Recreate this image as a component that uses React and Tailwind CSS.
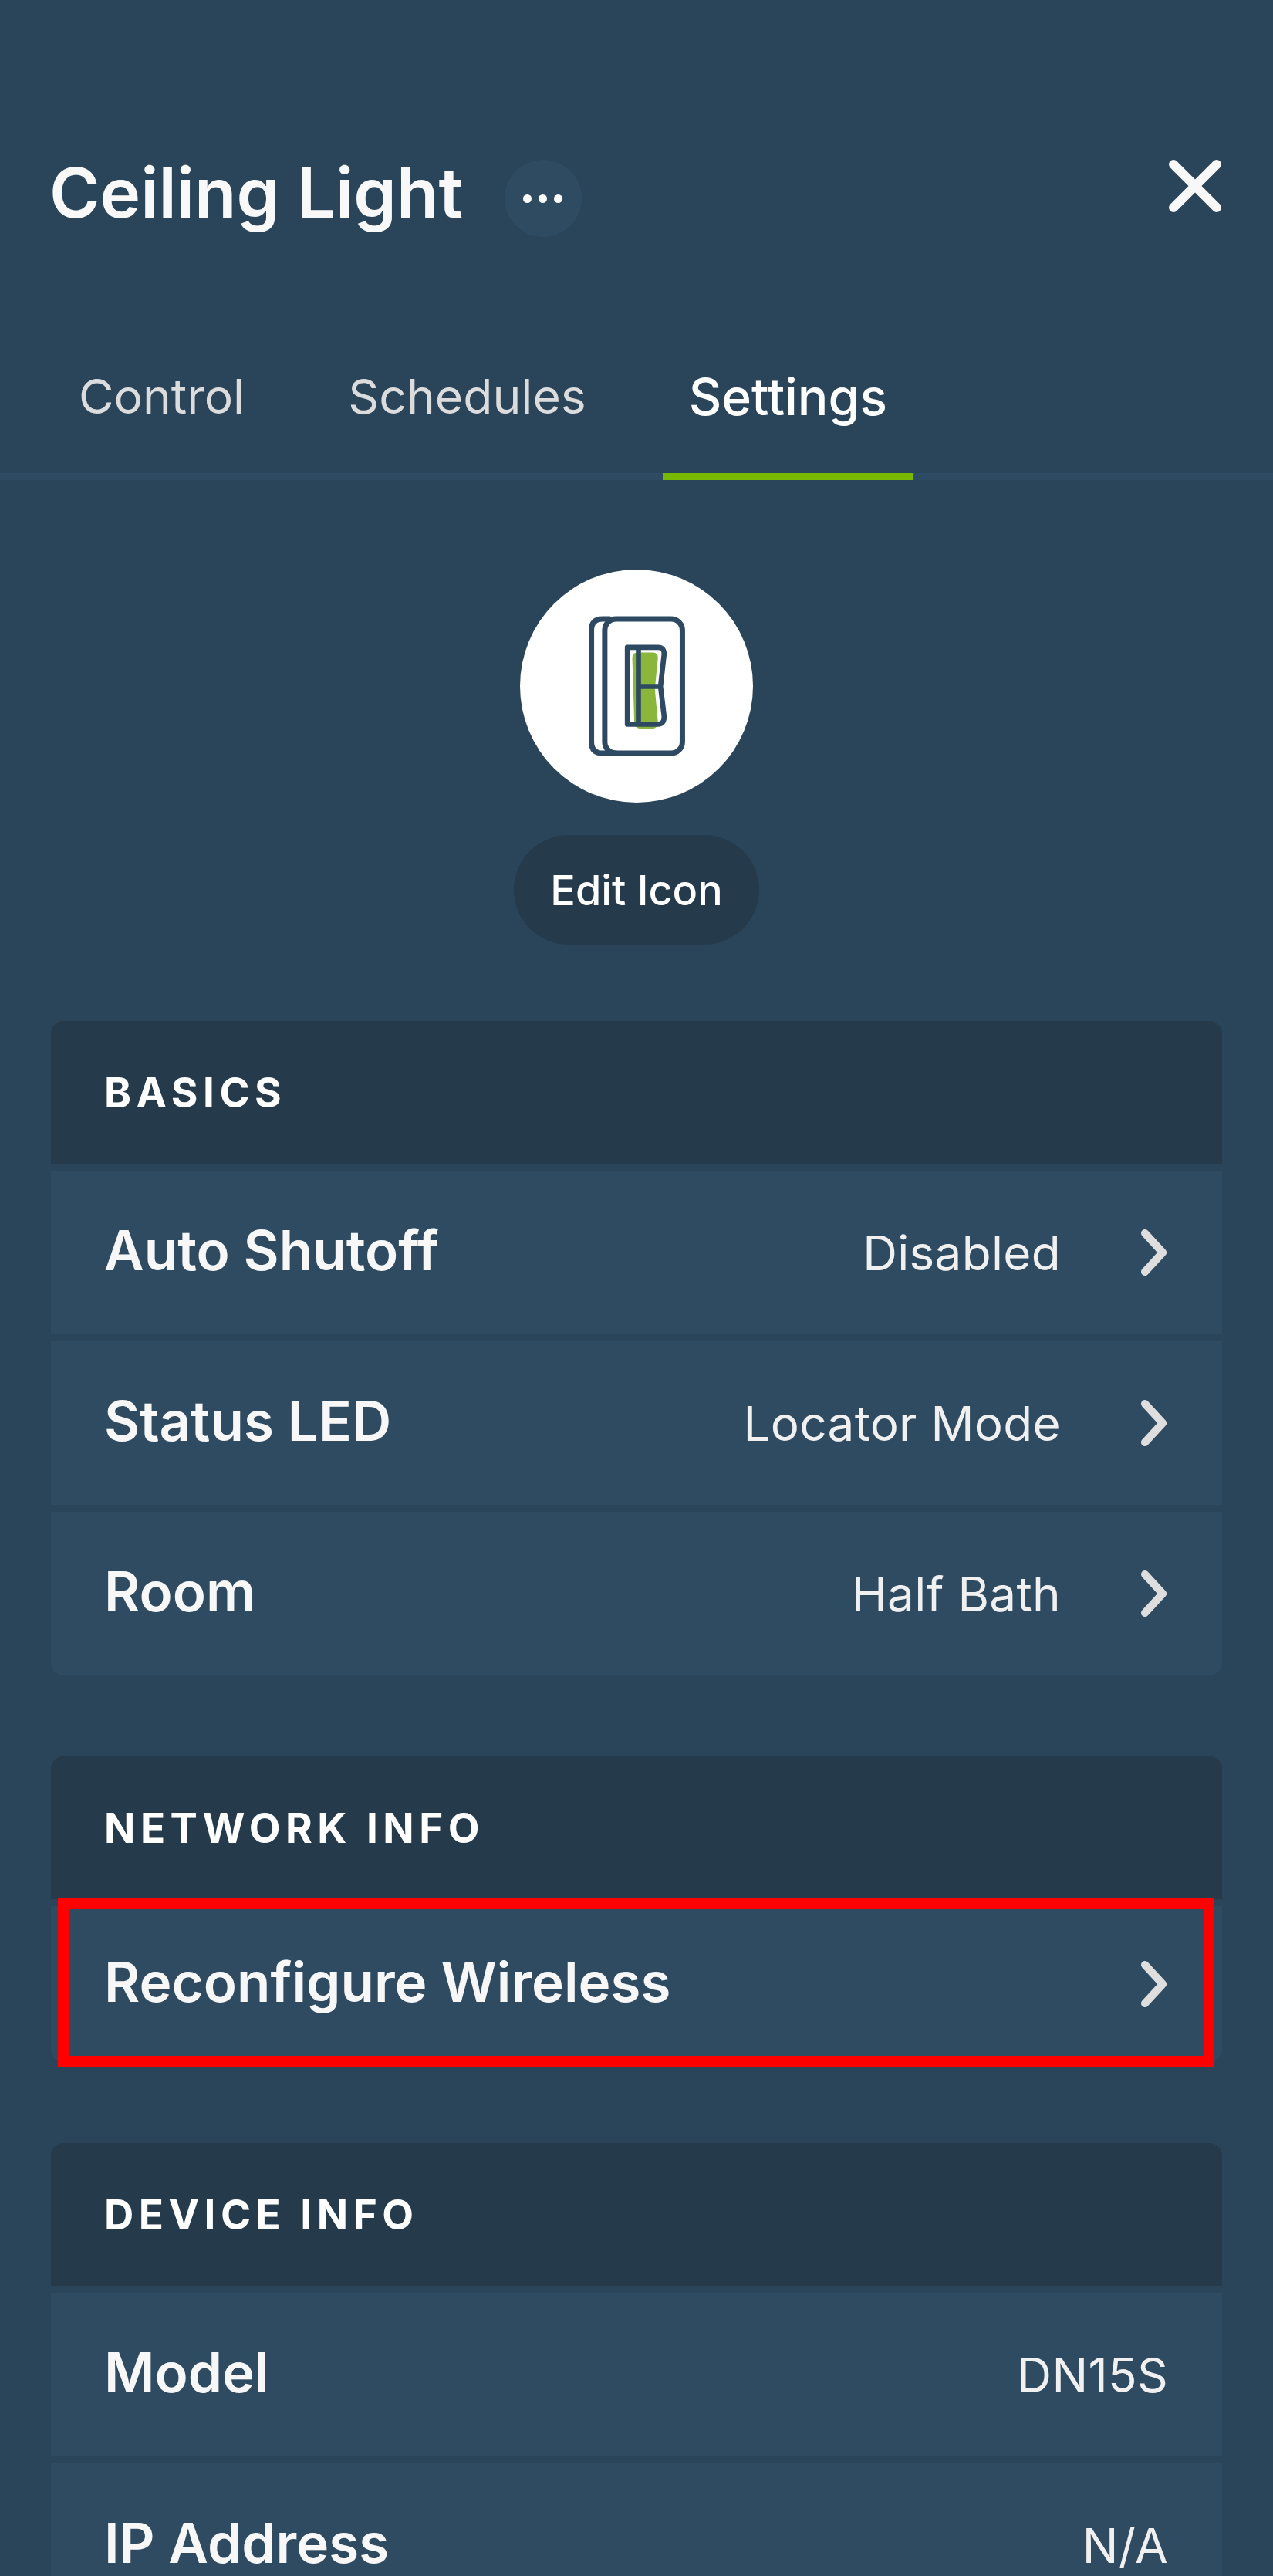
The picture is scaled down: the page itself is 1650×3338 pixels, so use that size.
import React from 'react';

const font = { fontFamily: '"Inter", "Liberation Sans", sans-serif' };

const Chevron = () => (
    <svg width="36" height="60" viewBox="0 0 36 60" fill="none" stroke="#dedede" strokeWidth="10" strokeLinecap="round" strokeLinejoin="round" className="shrink-0">
        <path d="M6 5 L29 30 L6 55" />
    </svg>
);

const SwitchIcon = () => (
    <svg width="302" height="302" viewBox="103 55 907 907" fill="none">
        <path d="M540 398 Q540 378 560 378 H620 Q640 378 640 398 L628 520 L640 650 Q640 675 615 675 H575 Q550 675 548 650 Z" fill="#8ab63c" />
        <g stroke="#2d4a62" strokeWidth="21" strokeLinejoin="round">
            <rect x="433" y="247" width="302" height="523" rx="44" />
            <path d="M455 247 H425 Q381 247 381 291 V726 Q381 770 425 770 H480" />
            <path d="M521 358 H640 Q665 358 664 385 L650 510 L664 625 Q665 657 640 657 H521 Z" strokeWidth="20" />
            <path d="M564 358 V657 M564 510 H650" strokeWidth="20" />
        </g>
    </svg>
);

const Row = ({ label, value, chevron, compact }) => (
    <div className={`flex items-center justify-between bg-[#2f4b62] pl-[69px] pr-[70px] ${compact ? 'h-[202px]' : 'h-[212px]'} last:rounded-b-[16px]`}>
        <span className="pb-[5px] text-[71px] font-semibold leading-none text-[#f7f7f7]">{label}</span>
        <div className="flex items-center gap-[103px]">
            {value && <span className="pt-[2px] text-[62px] leading-none text-[#f0f0f0] tracking-[0.3px]">{value}</span>}
            {chevron && <Chevron />}
        </div>
    </div>
);

const Section = ({ title, children, className }) => (
    <section className={`mx-[66px] flex flex-col gap-[9px] ${className || ''}`}>
        <div className="flex h-[185px] items-start rounded-t-[16px] bg-[#253b4c] pl-[69px] pt-[67px]">
            <h2 className="text-[53px] font-bold leading-none tracking-[6.5px] text-white">{title}</h2>
        </div>
        {children}
    </section>
);

const App = () => {
    return (
        <div style={font} className="relative h-[3338px] w-[1650px] overflow-hidden bg-[#2a4459]">
            <header className="flex h-[100px] items-center justify-between pl-[64px] pr-[67px] mt-[207px] pt-0">
                <div className="flex items-center gap-[54px]">
                    <h1 className="pb-[15px] text-[89px] font-semibold leading-none text-[#f8f8f8]">Ceiling Light</h1>
                    <button className="flex h-[100px] w-[100px] items-center justify-center gap-[9px] rounded-full bg-[#2f4b62]">
                        <span className="h-[11px] w-[11px] rounded-full bg-white" />
                        <span className="h-[11px] w-[11px] rounded-full bg-white" />
                        <span className="h-[11px] w-[11px] rounded-full bg-white" />
                    </button>
                </div>
                <svg width="68" height="68" viewBox="0 0 68 68" fill="none" stroke="#f8f8f8" strokeWidth="12" strokeLinecap="round" className="self-start">
                    <path d="M6 6 L62 62 M62 6 L6 62" />
                </svg>
            </header>

            <nav className="mt-[92px] flex h-[223px] gap-[64px] border-b-[9px] border-[#2f4a63] pl-[67px]">
                <div className="flex h-[223px] items-start px-[35px] pt-[84px] text-[62.4px] leading-none text-[#dcdcdc]">Control</div>
                <div className="flex h-[223px] items-start px-[35px] pt-[84px] text-[62.4px] leading-none text-[#dcdcdc]">Schedules</div>
                <div className="flex h-[223px] items-start border-b-[9px] border-[#79b800] px-[34px] pt-[82px] text-[66px] font-medium leading-none text-white">Settings</div>
            </nav>

            <div className="mt-[116px] flex flex-col items-center">
                <div className="h-[302px] w-[302px] rounded-full bg-white">
                    <SwitchIcon />
                </div>
                <button className="mt-[42px] flex h-[142px] w-[318px] items-center justify-center rounded-full bg-[#253b4c] text-[54px] font-medium text-white">
                    Edit Icon
                </button>
            </div>

            <Section title="BASICS" className="mt-[99px]">
                <Row label="Auto Shutoff" value="Disabled" chevron />
                <Row label="Status LED" value="Locator Mode" chevron />
                <Row label="Room" value="Half Bath" chevron />
            </Section>

            <Section title="NETWORK INFO" className="mt-[105px]">
                <Row label="Reconfigure Wireless" chevron compact />
            </Section>

            <Section title="DEVICE INFO" className="mt-[105px]">
                <Row label="Model" value="DN15S" />
                <Row label="IP Address" value="N/A" />
            </Section>

            {/* annotation box drawn over the row */}
            <div className="absolute left-[75px] top-[2460px] h-[218px] w-[1499px] border-[14px] border-[#ff0000]" />
        </div>
    );
};

export default App;
